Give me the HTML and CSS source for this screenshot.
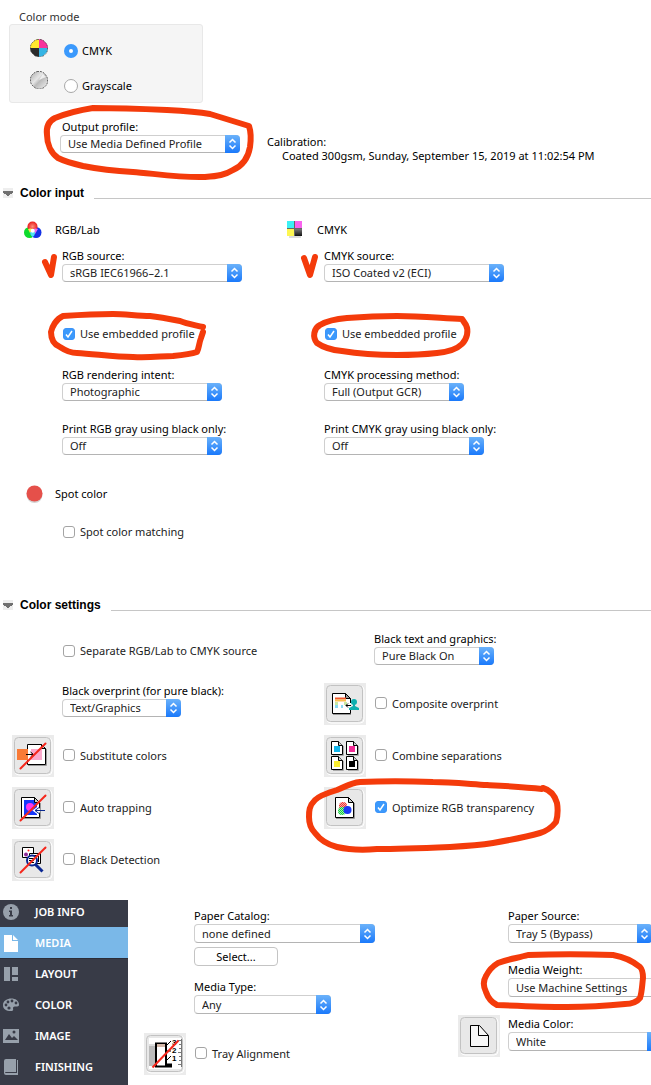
FILE: index.html
```html
<!DOCTYPE html>
<html lang="en">

<head>
    <meta charset="UTF-8">
    <meta name="viewport" content="width=device-width, initial-scale=1.0">
    <title>Color settings</title>
    <link rel="stylesheet" href="styles.css">
</head>

<body>
    <!-- shapes used more than once -->
    <svg class="defs" aria-hidden="true">
        <symbol id="sheet" viewBox="0 0 13 15">
            <path d="M2 14.500h10.500V5" fill="none" stroke="#aaa" />
            <path d="M.5 .5h7l4 4v9H.5z" fill="#fff" stroke="#000" />
            <path d="M7.500 .5v4h4" fill="#ccc" stroke="#000" />
        </symbol>
        <symbol id="frame" viewBox="0 0 42 42">
            <rect x="3" y="3" width="37" height="37" rx="4" fill="none" stroke="#fff" />
            <rect x="2.500" y="2.500" width="36" height="36" rx="4" fill="#e8e8e8" stroke="#c2c2c2" />
        </symbol>
    </svg>

    <main class="page">
        <form>
            <fieldset class="mode">
                <legend>Color mode</legend>
                <div class="mode-box">
                    <div class="mode-icons">
                        <svg width="18" height="18" viewBox="0 0 18 18">
                            <path d="M9 9V0L5 1 1 5 0 9z" fill="#ffe92e" />
                            <path d="M9 9V0l4 1 4 4 1 4z" fill="#f8339c" />
                            <path d="M9 9v9l4-1 4-4 1-4z" fill="#35b4e4" />
                            <path d="M9 9v9l-4-1-4-4-1-4z" fill="#2b2b2b" />
                            <path d="M7 .5h4l3 1.500 2.500 3 1 2.500v4l-1 2.500-2.500 2.500-3 1.500H7L4 16l-2.500-2.500L.5 11V7l1-2.500L4 2z" fill="none" stroke="#444" stroke-dasharray="2 1" stroke-opacity=".7" />
                        </svg>
                        <svg width="18" height="18" viewBox="0 0 18 18">
                            <defs>
                                <linearGradient id="silver" x1="0" y1="0" x2="1" y2="1">
                                    <stop offset="0" stop-color="#aaa" />
                                    <stop offset=".4" stop-color="#e6e6e6" />
                                    <stop offset=".55" stop-color="#bbb" />
                                    <stop offset="1" stop-color="#f4f4f4" />
                                </linearGradient>
                            </defs>
                            <path d="M7 .5h4l3 1.500 2.500 3 1 2.500v4l-1 2.500-2.500 2.500-3 1.500H7L4 16l-2.500-2.500L.5 11V7l1-2.500L4 2z" fill="url(#silver)" stroke="#666" stroke-dasharray="2 1" />
                            <path d="M9 9l4-6 3 3z" fill="#fff" fill-opacity=".7" />
                        </svg>
                    </div>
                    <div class="mode-options">
                        <label class="option"><input type="radio" name="mode" checked>CMYK</label>
                        <label class="option"><input type="radio" name="mode">Grayscale</label>
                    </div>
                </div>
            </fieldset>

            <div class="output">
                <div class="field">
                    <label class="indent" for="output">Output profile:</label>
                    <span class="select w180"><select id="output"><option>Use Media Defined Profile</option></select></span>
                </div>
                <dl class="calibration">
                    <dt>Calibration:</dt>
                    <dd>Coated 300gsm, Sunday, September 15, 2019 at 11:02:54 PM</dd>
                </dl>
            </div>

            <section class="color-input">
                <h2>Color input</h2>
                <div class="input-columns">
                    <div class="input-column">
                        <h3>
                            <svg width="20" height="18" viewBox="0 0 20 18">
                                <defs>
                                    <radialGradient id="red"><stop offset="0" stop-color="#ff8c7a" /><stop offset="1" stop-color="#e81c1c" /></radialGradient>
                                </defs>
                                <circle cx="5.500" cy="11.500" r="5.500" fill="#0edb2c" />
                                <circle cx="12" cy="11.500" r="5.500" fill="#1432e6" />
                                <circle cx="8.500" cy="5.500" r="5" fill="url(#red)" />
                                <path d="M4 8q2-1 5 0v3L6 12z" fill="#f5ee4a" />
                                <path d="M9 8q3-1 5 0l-3 5-2-1z" fill="#e66cf0" />
                                <path d="M6 11l5 0q0 4-2.500 5Q6 14 6 11z" fill="#4ce4f2" />
                                <circle cx="8.700" cy="9.800" r="2" fill="#fff" />
                            </svg>
                            RGB/Lab
                        </h3>
                        <div class="field">
                            <label for="rgb-source">RGB source:</label>
                            <span class="select w180"><select id="rgb-source"><option>sRGB IEC61966–2.1</option></select></span>
                        </div>
                        <label class="check embedded"><input type="checkbox" checked>Use embedded profile</label>
                        <div class="field">
                            <label for="intent">RGB rendering intent:</label>
                            <span class="select w160"><select id="intent"><option>Photographic</option></select></span>
                        </div>
                        <div class="field gray">
                            <label for="rgb-gray">Print RGB gray using black only:</label>
                            <span class="select w160"><select id="rgb-gray"><option>Off</option></select></span>
                        </div>
                    </div>
                    <div class="input-column">
                        <h3>
                            <svg width="20" height="18" viewBox="0 0 20 18">
                                <defs>
                                    <linearGradient id="dark" x2="0" y2="1"><stop offset="0" stop-color="#777" /><stop offset="1" stop-color="#111" /></linearGradient>
                                </defs>
                                <path d="M3 15h12v2H3z" fill="#ddd" />
                                <path d="M1 0h15v15H1z" fill="#666" />
                                <path d="M1 0h7v7H1z" fill="#3cf0f4" />
                                <path d="M9 0h7v7H9z" fill="#f963ee" />
                                <path d="M1 8h7v7H1z" fill="#fdf651" />
                                <path d="M9 8h7v7H9z" fill="url(#dark)" />
                            </svg>
                            CMYK
                        </h3>
                        <div class="field">
                            <label for="cmyk-source">CMYK source:</label>
                            <span class="select w180"><select id="cmyk-source"><option>ISO Coated v2 (ECI)</option></select></span>
                        </div>
                        <label class="check embedded"><input type="checkbox" checked>Use embedded profile</label>
                        <div class="field">
                            <label for="method">CMYK processing method:</label>
                            <span class="select w140"><select id="method"><option>Full (Output GCR)</option></select></span>
                        </div>
                        <div class="field gray">
                            <label for="cmyk-gray">Print CMYK gray using black only:</label>
                            <span class="select w160"><select id="cmyk-gray"><option>Off</option></select></span>
                        </div>
                    </div>
                </div>
                <div class="input-column spot">
                    <h3>
                        <svg width="20" height="18" viewBox="0 0 20 18">
                            <circle cx="10.500" cy="10" r="8" fill="#d4d4d4" />
                            <circle cx="10.500" cy="8.500" r="8" fill="#e5504a" />
                        </svg>
                        Spot color
                    </h3>
                    <label class="check"><input type="checkbox">Spot color matching</label>
                </div>
            </section>

            <section class="color-settings">
                <h2>Color settings</h2>
                <div class="settings-columns">
                    <div class="settings-column">
                        <label class="check separate"><input type="checkbox">Separate RGB/Lab to CMYK source</label>
                        <div class="field">
                            <label for="overprint">Black overprint (for pure black):</label>
                            <span class="select w119"><select id="overprint"><option>Text/Graphics</option></select></span>
                        </div>
                        <div class="features">
                            <div class="feature">
                                <svg class="tile" viewBox="0 0 42 42">
                                    <use href="#frame" />
                                    <path d="M16 30.500h18.500V14" fill="none" stroke="#999" />
                                    <path d="M15.500 9.500h14l4 4v16h-18z" fill="#fff" stroke="#000" />
                                    <path d="M29.500 9.500v4h4z" fill="#ccc" stroke="#000" />
                                    <path d="M5 14h11v11H5z" fill="#f97b37" />
                                    <path d="M19 14h11v11H19z" fill="#fba9cc" />
                                    <path d="M14 19.500h7M18.500 17l3 2.500-3 2.500" fill="none" stroke="#000" />
                                    <path d="M8.500 33.500l25-25" stroke="#f5271c" stroke-width="2" stroke-linecap="round" />
                                </svg>
                                <label class="check"><input type="checkbox">Substitute colors</label>
                            </div>
                            <div class="feature">
                                <svg class="tile" viewBox="0 0 42 42">
                                    <use href="#frame" />
                                    <path d="M10 31.500h18.500V16" fill="none" stroke="#999" />
                                    <path d="M9.500 10.500h13l5 5v15h-18z" fill="#fff" stroke="#000" />
                                    <path d="M12 13h10l3 4v11H12z" fill="#1638fb" />
                                    <path d="M22.500 10.500v5h5z" fill="#ccc" stroke="#000" />
                                    <circle cx="18" cy="20" r="4" fill="#fb36ee" />
                                    <path d="M28 23.500h-5m4-3l-4 3 4 3" fill="none" stroke="#fff" stroke-width="3" />
                                    <path d="M33 23.500H23m4-3l-4 3 4 3" fill="none" stroke="#092990" />
                                    <path d="M8.500 33.500l25-25" stroke="#f5271c" stroke-width="2" stroke-linecap="round" />
                                </svg>
                                <label class="check"><input type="checkbox">Auto trapping</label>
                            </div>
                            <div class="feature">
                                <svg class="tile" viewBox="0 0 42 42">
                                    <use href="#frame" />
                                    <path d="M10.500 8.500h11v10h-11z" fill="#fff" stroke="#000" />
                                    <path d="M17.500 14.500h11v10h-11z" fill="#fff" stroke="#000" />
                                    <path d="M20 16.500h5M26.500 17v6" fill="none" stroke="#000" />
                                    <circle cx="16.500" cy="11.500" r="1" fill="#f22" />
                                    <circle cx="14" cy="15.500" r="2" fill="#8c2a96" />
                                    <path d="M23.500 25.500l7 7" stroke="#0a2793" stroke-width="3" />
                                    <circle cx="20" cy="21.500" r="5" fill="#fff" stroke="#0a2793" stroke-width="2" />
                                    <path d="M17 19.500h6M17 21.500h5M18 23.500h4" stroke="#000" />
                                    <path d="M8.500 33.500l25-25" stroke="#f5271c" stroke-width="2" stroke-linecap="round" />
                                </svg>
                                <label class="check"><input type="checkbox">Black Detection</label>
                            </div>
                        </div>
                    </div>
                    <div class="settings-column">
                        <div class="field black-text">
                            <label for="black-text">Black text and graphics:</label>
                            <span class="select w120"><select id="black-text"><option>Pure Black On</option></select></span>
                        </div>
                        <div class="features">
                            <div class="feature">
                                <svg class="tile" viewBox="0 0 42 42">
                                    <use href="#frame" />
                                    <path d="M9 31.500h18" stroke="#999" />
                                    <path d="M8.500 10.500h13l5 5v15h-18z" fill="#fff" stroke="#000" />
                                    <path d="M21.500 10.500v5h5z" fill="#999" stroke="#000" />
                                    <path d="M11 15.500h11" stroke="#f3572f" stroke-width="2" />
                                    <path d="M11 17.500h11" stroke="#fbc04d" stroke-width="2" />
                                    <path d="M11 20.500h3m6 0h3" stroke="#c7e9a5" stroke-width="3" />
                                    <path d="M11 23.500h3m3 0h2" stroke="#8ad9f0" stroke-width="3" />
                                    <path d="M25 20v6" stroke="#fff" stroke-width="4" />
                                    <path d="M27 22.500h-5m2-2l-2 2 2 2" fill="none" stroke="#000" />
                                    <circle cx="30" cy="19" r="3" fill="#0eafaf" />
                                    <path d="M29 20h2v3l4 2v2H25v-2l4-2z" fill="#0eafaf" />
                                </svg>
                                <label class="check"><input type="checkbox">Composite overprint</label>
                            </div>
                            <div class="feature">
                                <svg class="tile" viewBox="0 0 42 42">
                                    <use href="#frame" />
                                    <use href="#sheet" x="7" y="6" width="13" height="15" />
                                    <use href="#sheet" x="22" y="6" width="13" height="15" />
                                    <use href="#sheet" x="7" y="21" width="13" height="15" />
                                    <use href="#sheet" x="22" y="21" width="13" height="15" />
                                    <path d="M10 11h6v6h-6z" fill="#12b5ea" />
                                    <path d="M25 11h6v6h-6z" fill="#f22c96" />
                                    <path d="M10 26h6v6h-6z" fill="#fbee2f" />
                                    <path d="M25 26h6v6h-6z" fill="#000" />
                                </svg>
                                <label class="check"><input type="checkbox">Combine separations</label>
                            </div>
                            <div class="feature">
                                <svg class="tile" viewBox="0 0 42 42">
                                    <defs>
                                        <pattern id="dots" width="2" height="2" patternUnits="userSpaceOnUse">
                                            <path d="M0 0h1v1H0zM1 1h1v1H1z" fill="#fff" fill-opacity=".6" />
                                        </pattern>
                                    </defs>
                                    <use href="#frame" />
                                    <path d="M12 31.500h18.500V16" fill="none" stroke="#999" />
                                    <path d="M11.500 10.500h13l5 5v15h-18z" fill="#fff" stroke="#000" />
                                    <path d="M24.500 10.500v5h5z" fill="#ccc" stroke="#000" />
                                    <circle cx="19" cy="19" r="4" fill="#f3302c" />
                                    <circle cx="18" cy="24" r="4" fill="#10d13b" />
                                    <path d="M14 14h9v14h-9z" fill="url(#dots)" />
                                    <circle cx="23.500" cy="23" r="4" fill="#1a38f5" />
                                </svg>
                                <label class="check"><input type="checkbox" checked>Optimize RGB transparency</label>
                            </div>
                        </div>
                    </div>
                </div>
            </section>
        </form>

        <div class="job">
            <nav class="sidebar">
                <a href="#job-info">
                    <svg width="20" height="20" viewBox="0 0 20 20"><circle cx="11" cy="10" r="8" fill="#97a0ab" /><path d="M10 5h2v2h-2zM9 8.500h3v4.500h1v1.500H9V13h1v-3H9z" fill="#383b47" /></svg>
                    JOB INFO
                </a>
                <a class="active" href="#media">
                    <svg width="20" height="20" viewBox="0 0 20 20"><path d="M4 2h8v6h6v11H4zM13 2l5 5h-5z" fill="#fff" /></svg>
                    MEDIA
                </a>
                <a href="#layout">
                    <svg width="20" height="20" viewBox="0 0 20 20"><path d="M4 3h6v14H4zM12 3h6v8h-6zM12 13h6v4h-6z" fill="#97a0ab" /></svg>
                    LAYOUT
                </a>
                <a href="#color">
                    <svg width="20" height="20" viewBox="0 0 20 20"><path d="M3 10c0-8 16-9 16 0 0 3-6 0-6 3 0 1 1 3-2 3-5 0-8-2-8-6z" fill="#97a0ab" /><g fill="#383b47"><circle cx="6" cy="10" r="1.400" /><circle cx="8" cy="7" r="1.400" /><circle cx="12" cy="6" r="1.400" /><circle cx="16" cy="8" r="1.400" /><circle cx="9" cy="13" r="1.600" /></g></svg>
                    COLOR
                </a>
                <a href="#image">
                    <svg width="20" height="20" viewBox="0 0 20 20"><path d="M3 3h16v14H3z" fill="#97a0ab" /><path d="M5 14l4-6 3 4 2-2 4 4z" fill="#383b47" /><circle cx="14" cy="6" r="1.500" fill="#383b47" /></svg>
                    IMAGE
                </a>
                <a href="#finishing">
                    <svg width="20" height="20" viewBox="0 0 20 20"><path d="M6 2h10v13H6q-1 0-1 1h12V3h1v15H6q-2 0-2-2V4q0-2 2-2z" fill="#97a0ab" /></svg>
                    FINISHING
                </a>
            </nav>
            <div class="media">
                <div class="media-left">
                    <div class="field">
                        <label for="catalog">Paper Catalog:</label>
                        <span class="select w181"><select id="catalog"><option>none defined</option></select></span>
                        <button class="button" type="button">Select...</button>
                    </div>
                    <div class="field">
                        <label for="type">Media Type:</label>
                        <span class="select w137"><select id="type"><option>Any</option></select></span>
                    </div>
                    <div class="feature">
                        <svg class="tile" viewBox="0 0 42 42">
                            <use href="#frame" />
                            <path d="M5 5h32v31H5z" fill="#fff" />
                            <path d="M5 13h6v20H5z" fill="#bbb" />
                            <path d="M5 11h6v2H5z" fill="#ddd" />
                            <path d="M12 10.500h10v21h5v2H12z" fill="#fff" stroke="#000" stroke-width="2" />
                            <path d="M13 11h8v3h-8z" fill="#d5b9aa" />
                            <path d="M23 12l4-4M23 18h4M23 27l4-4" stroke="#000" />
                            <path d="M37.500 6v28M34 7.500h4M35 11.500h3M35 15.500h3M34 19.500h4M35 23.500h3M35 27.500h3M34 31.500h4" fill="none" stroke="#777" />
                            <g class="ticks"><text x="28" y="12">3</text><text x="28" y="20">2</text><text x="28" y="28">1</text></g>
                            <path d="M8.500 34.500l26-27" stroke="#f5271c" stroke-width="2" />
                        </svg>
                        <label class="check"><input type="checkbox">Tray Alignment</label>
                    </div>
                </div>
                <div class="media-right">
                    <div class="field">
                        <label for="source">Paper Source:</label>
                        <span class="select w144"><select id="source"><option>Tray 5 (Bypass)</option></select></span>
                    </div>
                    <div class="field">
                        <label for="weight">Media Weight:</label>
                        <span class="select w180"><select id="weight"><option>Use Machine Settings</option></select></span>
                    </div>
                    <div class="feature">
                        <svg class="tile" viewBox="0 0 42 42">
                            <use href="#frame" />
                            <path d="M12.500 10.500h9l9 10v11h-18z" fill="#f7f7f7" stroke="#000" />
                            <path d="M20.500 10.500v10h10" fill="none" stroke="#000" />
                        </svg>
                        <div class="field">
                            <label for="color">Media Color:</label>
                            <span class="select w154"><select id="color"><option>White</option></select></span>
                        </div>
                    </div>
                </div>
            </div>
        </div>

        <!-- red marker notes, drawn over the form -->
        <svg class="marker" width="651" height="1085" viewBox="0 0 651 1085" aria-hidden="true">
            <path d="M55 118C65 114 80 110 93 108C115 108 145 109 167 110C185 111 198 112 210 114L249 126C251 132 251 140 250 147C248 159 242 166 233 170C225 175 218 176 205 177C180 178 150 173 133 172C115 171 98 169 83 166C70 163 64 161 58 158C51 153 47 144 47 135C46 127 49 121 55 118Z" />
            <path d="M45 262L51 275L54 257M304 258L310 275L315 257" />
            <path d="M203 327C195 325 187 324 180 321C170 319 160 317 150 316C138 316 125 314 113 314C95 314 78 315 63 316C56 319 52 327 51 332C51 341 55 345 60 347C66 351 71 353 77 353C95 354 115 357 133 357C150 358 162 356 173 356C183 355 191 354 197 352C199 348 199 343 201 338L203 332" />
            <path d="M462 319C440 318 420 316 397 316C375 316 360 317 347 318C335 319 325 322 320 325C314 328 312 337 317 343C324 348 332 350 342 351C360 354 380 355 397 355C415 355 428 354 437 353C448 352 457 349 462 344C467 339 469 331 466 325Z" />
            <path d="M542 789C524 787 505 786 487 785C470 784 450 782 433 782C410 781 380 781 360 782C350 783 345 787 337 790C327 793 319 796 315 800C309 806 309 811 309 817C309 825 311 829 315 833C321 841 329 845 337 847C350 850 365 850 377 849C400 849 425 848 450 847C467 846 480 845 493 843C510 840 526 837 540 833C547 831 552 827 556 822C558 815 558 809 557 803C555 796 550 790 543 788" />
            <path d="M528 955C555 954 585 954 613 955C624 957 634 962 640 967C643 970 643 974 643 978C642 986 642 992 640 998C637 1002 632 1004 625 1004C605 1006 587 1007 567 1007C543 1007 520 1006 497 1005C491 1002 488 998 486 992C483 986 483 981 486 976C489 970 493 966 498 963C508 959 518 958 528 955Z" />
        </svg>
    </main>
</body>

</html>
```
FILE: styles.css
```css
* {
    box-sizing: border-box;
}

body {
    margin: 0;
    background: #fff;
    color: #000;
    font-family: 'Noto Sans', sans-serif;
    font-size: 11px;
    line-height: 17px;
}

.page {
    position: relative;
    overflow: hidden;
}

.defs {
    display: none;
}

.marker {
    position: absolute;
    top: 0;
    left: 0;
    pointer-events: none;
    fill: none;
    stroke: #f43b0b;
    stroke-width: 6px;
    stroke-linecap: round;
    stroke-linejoin: round;
}

/* controls */

input,
select,
button {
    margin: 0;
    font: inherit;
    color: inherit;
}

.field {
    display: flex;
    flex-direction: column;
    align-items: flex-start;
}

.field label {
    white-space: nowrap;
}

.field .indent {
    padding-left: 2px;
}

.select {
    position: relative;
    height: 18px;
    flex: none;
}

.select select {
    appearance: none;
    display: block;
    width: 100%;
    height: 100%;
    padding: 0 16px 0 7px;
    border: 1px solid #cfcfcf;
    border-bottom-color: #b4b4b4;
    border-radius: 4px;
    background: #fff;
    line-height: 16px;
    color: #222;
}

.select::after {
    content: "";
    position: absolute;
    top: 0;
    right: 0;
    width: 15px;
    height: 100%;
    border-radius: 0 4px 4px 0;
    background: url("data:image/svg+xml,%3Csvg xmlns='http://www.w3.org/2000/svg' width='15' height='18'%3E%3Cpath d='M4.500 7.500l3-3 3 3M4.500 10.500l3 3 3-3' fill='none' stroke='%23fff' stroke-width='1.500'/%3E%3C/svg%3E") center no-repeat, linear-gradient(#6bb2fa, #1a79fb);
    pointer-events: none;
}

.w119 { width: 119px; }
.w120 { width: 120px; }
.w137 { width: 137px; }
.w140 { width: 140px; }
.w144 { width: 144px; }
.w154 { width: 154px; }
.w160 { width: 160px; }
.w180 { width: 180px; }
.w181 { width: 181px; }

.check {
    display: flex;
    align-items: center;
    gap: 5px;
    padding-left: 1px;
    white-space: nowrap;
    color: #222;
}

.check input {
    appearance: none;
    width: 12px;
    height: 12px;
    border: 1px solid #a4a4a4;
    border-radius: 3px;
    background: #fff;
}

.check input:checked {
    border-color: #3b93f9;
    background: #3b99fc url("data:image/svg+xml,%3Csvg xmlns='http://www.w3.org/2000/svg' width='10' height='10'%3E%3Cpath d='M2 5.500l2 2.500 4-6' fill='none' stroke='%23fff' stroke-width='1.500'/%3E%3C/svg%3E") center no-repeat;
}

.option {
    display: flex;
    align-items: center;
    gap: 4px;
    line-height: 14px;
}

.option input {
    appearance: none;
    width: 14px;
    height: 14px;
    border: 1px solid #a8a8a8;
    border-radius: 50%;
    background: #fff;
}

.option input:checked {
    border: 5px solid #3b99fc;
}

.button {
    width: 84px;
    height: 19px;
    margin-top: 4px;
    padding: 0;
    border: 1px solid #c4c4c4;
    border-radius: 4px;
    background: #fff;
    line-height: 17px;
}

/* color mode */

.mode {
    margin: 0;
    padding: 9px 0 0 9px;
    border: 0;
    min-width: 0;
}

.mode legend {
    float: left;
    padding: 0 0 0 10px;
    line-height: 15px;
    color: #333;
}

.mode-box {
    clear: both;
    display: flex;
    gap: 16px;
    width: 194px;
    height: 79px;
    padding-left: 20px;
    border: 1px solid #e8e8e8;
    border-radius: 3px;
    background: #f5f5f5;
}

.mode-icons {
    display: flex;
    flex-direction: column;
    gap: 14px;
    padding-top: 14px;
}

.mode-options {
    display: flex;
    flex-direction: column;
    gap: 21px;
    padding-top: 19px;
}

.output {
    display: flex;
    gap: 27px;
    padding: 15px 0 0 60px;
}

.calibration {
    margin: 17px 0 0;
    line-height: 14px;
    white-space: nowrap;
}

.calibration dd {
    margin: 0 0 0 15px;
}

/* sections */

h2 {
    display: flex;
    align-items: center;
    gap: 7px;
    margin: 0;
    padding-left: 3px;
    font: bold 12px/16px 'Liberation Sans', Arial, sans-serif;
}

h2::before {
    content: "";
    width: 10px;
    height: 10px;
    background: conic-gradient(from -60deg at 50% 80%, #707070 120deg, #eee 0) 0 3px / 10px 6px no-repeat, #eee;
}

h2::after {
    content: "";
    flex: 1;
    height: 1px;
    margin: 10px 0 0 3px;
    background: #c6c6c6;
}

h3 {
    display: flex;
    gap: 11px;
    height: 17px;
    margin: 0 0 9px -38px;
    font: inherit;
}

h3 svg {
    flex: none;
}

.color-input {
    padding-top: 22px;
}

.input-columns {
    display: grid;
    grid-template-columns: 262px 1fr;
    padding-top: 20px;
}

.input-column {
    padding-left: 62px;
}

.embedded {
    margin: 43px 0 24px;
}

.gray {
    margin-top: 19px;
}

.spot {
    padding-top: 30px;
}

.spot h3 {
    margin-bottom: 21px;
}

.color-settings {
    padding-top: 57px;
}

.settings-columns {
    display: grid;
    grid-template-columns: 312px 1fr;
    padding-top: 17px;
}

.settings-column {
    padding-left: 12px;
}

.settings-column > .check,
.settings-column > .field {
    margin-left: 50px;
}

.separate {
    margin-top: 12px;
    margin-bottom: 23px;
}

.features {
    display: flex;
    flex-direction: column;
    gap: 10px;
    padding-top: 18px;
}

.feature {
    display: flex;
    gap: 8px;
}

.feature .check {
    height: 40px;
}

.tile {
    flex: none;
    width: 42px;
    height: 42px;
    background: #ebebeb;
}

.ticks {
    font: bold 8px 'Liberation Sans', Arial, sans-serif;
}

/* job panel */

.job {
    display: flex;
    height: 185px;
    margin-top: 19px;
}

.sidebar {
    flex: none;
    width: 128px;
    overflow: hidden;
    background: #383b47;
}

.sidebar a {
    display: flex;
    align-items: center;
    gap: 15px;
    height: 31px;
    color: #fff;
    font-weight: 600;
    text-decoration: none;
}

.sidebar a:first-child {
    margin-top: -4px;
}

.sidebar .active {
    background: #7ab8e8;
    box-shadow: 0 1px #2b2d38;
}

.media {
    flex: 1;
    display: grid;
    grid-template-columns: 314px 1fr;
    padding: 7px 0 0 16px;
    overflow: hidden;
}

.media .select {
    height: 19px;
}

.media-left > .field,
.media-right > .field {
    margin-left: 50px;
}

.media-left,
.media-right {
    display: flex;
    flex-direction: column;
}

.media-left {
    gap: 12px;
}

.media-right {
    gap: 18px;
}

.media-left .feature {
    margin-top: 7px;
}
```
